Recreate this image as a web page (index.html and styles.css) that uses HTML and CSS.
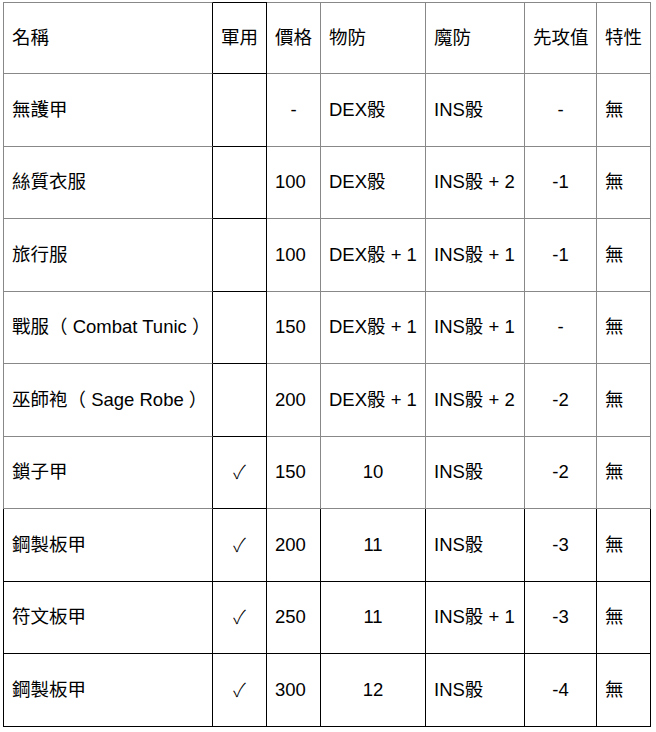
FILE: index.html
```html
<!DOCTYPE html>
<html lang="zh-Hant">
<head>
<meta charset="utf-8">
<title>防具表</title>
<link rel="stylesheet" href="styles.css">
</head>
<body>
<table class="sheet">
  <colgroup>
    <col class="c-name"><col class="c-mil"><col class="c-price"><col class="c-pdef"><col class="c-mdef"><col class="c-init"><col class="c-trait">
  </colgroup>
  <tr class="head">
    <td class="name">名稱</td><td class="mil">軍用</td><td>價格</td><td>物防</td><td>魔防</td><td>先攻值</td><td>特性</td>
  </tr>
  <tr class="row">
    <td class="name">無護甲</td><td class="mil"></td><td class="mid">-</td><td>DEX骰</td><td>INS骰</td><td class="mid">-</td><td>無</td>
  </tr>
  <tr class="row">
    <td class="name">絲質衣服</td><td class="mil"></td><td>100</td><td>DEX骰</td><td>INS骰 + 2</td><td class="mid">-1</td><td>無</td>
  </tr>
  <tr class="row">
    <td class="name">旅行服</td><td class="mil"></td><td>100</td><td>DEX骰 + 1</td><td>INS骰 + 1</td><td class="mid">-1</td><td>無</td>
  </tr>
  <tr class="row">
    <td class="name">戰服（ Combat Tunic ）</td><td class="mil"></td><td>150</td><td>DEX骰 + 1</td><td>INS骰 + 1</td><td class="mid">-</td><td>無</td>
  </tr>
  <tr class="row">
    <td class="name">巫師袍（ Sage Robe ）</td><td class="mil"></td><td>200</td><td>DEX骰 + 1</td><td>INS骰 + 2</td><td class="mid">-2</td><td>無</td>
  </tr>
  <tr class="row">
    <td class="name">鎖子甲</td><td class="mil mid"><span class="check">✓</span></td><td>150</td><td class="mid">10</td><td>INS骰</td><td class="mid">-2</td><td>無</td>
  </tr>
  <tr class="row dark">
    <td class="name">鋼製板甲</td><td class="mil mid"><span class="check">✓</span></td><td>200</td><td class="mid">11</td><td>INS骰</td><td class="mid">-3</td><td>無</td>
  </tr>
  <tr class="row dark">
    <td class="name">符文板甲</td><td class="mil mid"><span class="check">✓</span></td><td>250</td><td class="mid">11</td><td>INS骰 + 1</td><td class="mid">-3</td><td>無</td>
  </tr>
  <tr class="row dark">
    <td class="name">鋼製板甲</td><td class="mil mid"><span class="check">✓</span></td><td>300</td><td class="mid">12</td><td>INS骰</td><td class="mid">-4</td><td>無</td>
  </tr>
</table>
</body>
</html>
```

FILE: styles.css
```css
html, body {
  margin: 0;
  padding: 0;
  background: #fff;
}

body {
  font-family: "Liberation Sans", "Noto Sans CJK TC", sans-serif;
  font-size: 18.5px;
  line-height: 26px;
  color: #000;
}

.sheet {
  border-collapse: separate;
  border-spacing: 0;
  table-layout: fixed;
  width: 648px;
  margin: 2px 0 0 3px;
}

.c-name { width: 210px; }
.c-mil { width: 54px; }
.c-price { width: 54px; }
.c-pdef { width: 105px; }
.c-mdef { width: 99px; }
.c-init { width: 72px; }
.c-trait { width: 54px; }

.sheet td {
  border-right: 1px solid #888;
  border-bottom: 1px solid #888;
  padding: 0 8px;
  vertical-align: middle;
  text-align: left;
  white-space: nowrap;
  overflow: visible;
}

.head { height: 72px; }
.row { height: 72.5px; }

.head td { border-top: 1px solid #888; }

.sheet td.name { border-left: 1px solid #888; border-right-color: #000; }

.sheet td.mil {
  border-right-color: #000;
  border-bottom-color: #000;
}
.head td.mil { border-top-color: #000; }

.sheet td.mid { text-align: center; }

.dark td {
  border-right-color: #000;
  border-bottom-color: #000;
}
.sheet .dark td.name { border-left-color: #000; }

.check {
  font-family: "Noto Sans CJK TC", "DejaVu Sans", sans-serif;
  font-size: 19px;
  font-weight: 300;
  line-height: 26px;
}
```
